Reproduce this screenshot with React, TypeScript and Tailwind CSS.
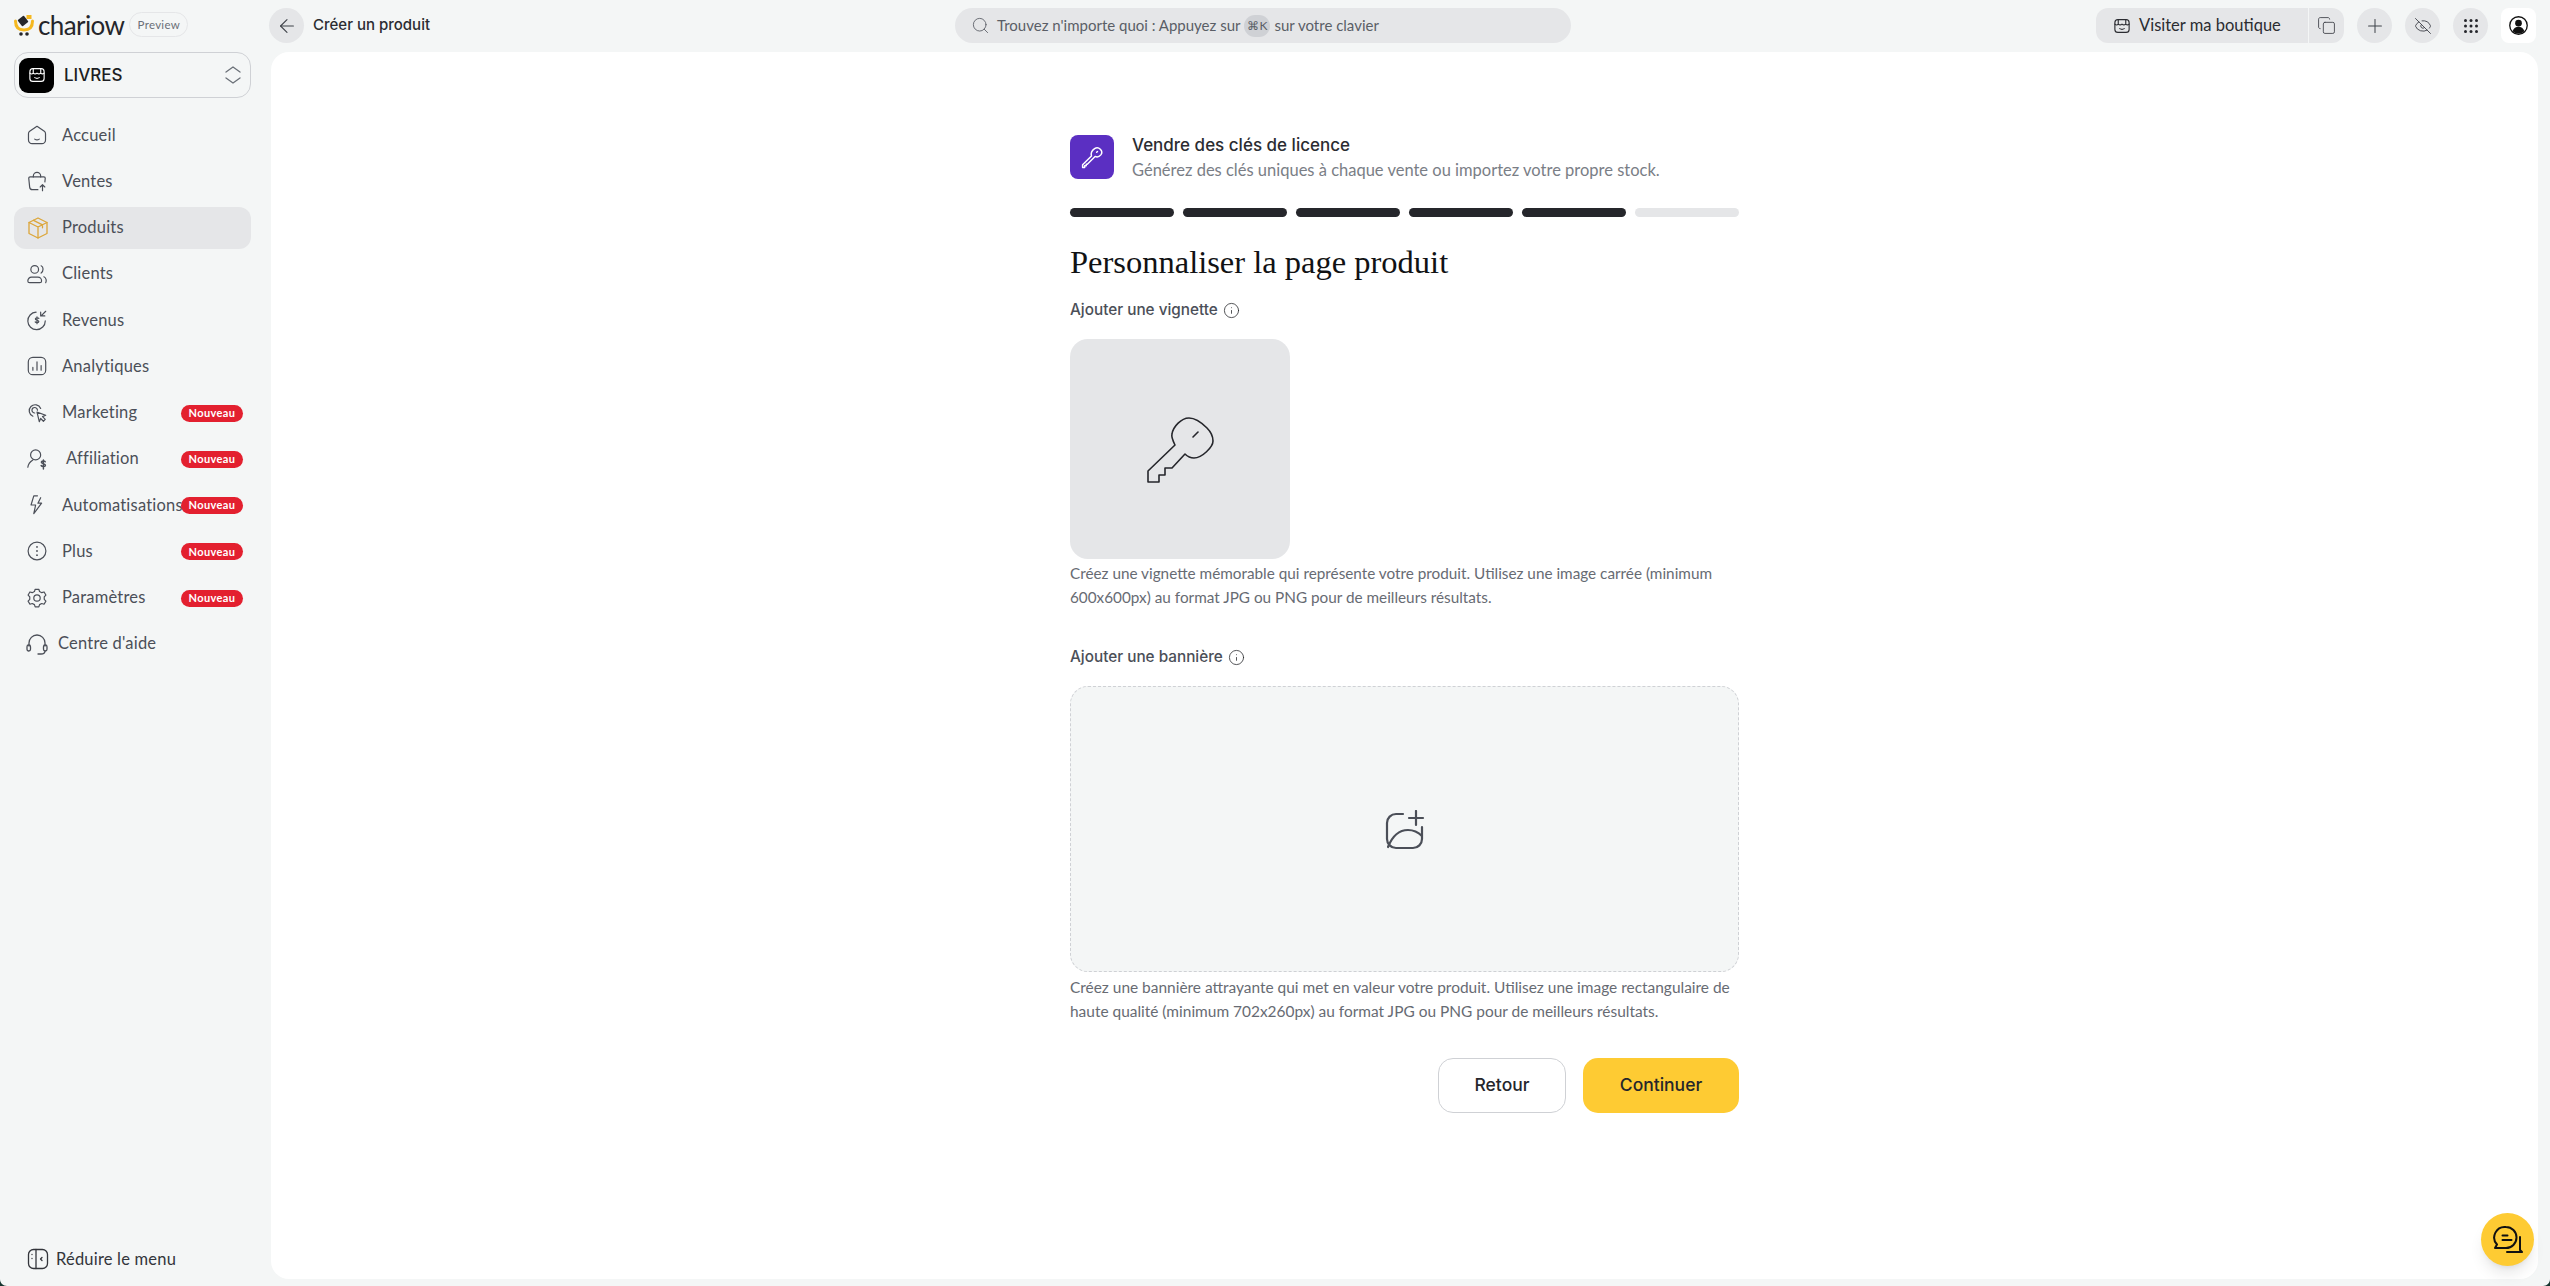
import React from "react";
import { ArrowLeft, Search, Plus, Copy, EyeOff, Info } from "lucide-react";

const S = (p: { size?: number; children: React.ReactNode; sw?: number; className?: string }) => (
  <svg width={p.size ?? 24} height={p.size ?? 24} viewBox="0 0 24 24" fill="none" stroke="currentColor" strokeWidth={p.sw ?? 1.3} strokeLinecap="round" strokeLinejoin="round" className={p.className}>
    {p.children}
  </svg>
);

const HomeI = () => <S><path d="M12 2.500 4 8a3 3 0 0 0-1.300 2.500v7a4 4 0 0 0 4 4h10.600a4 4 0 0 0 4-4v-7A3 3 0 0 0 20 8Z" /><path d="M9.500 16.500c1.500 1 3.500 1 5 0" /></S>;
const BagI = () => <S><path d="M8 7.500v-1a4 4 0 0 1 8 0v1" /><path d="M13 21.500H7a3 3 0 0 1-3-2.800L3 9a1.500 1.500 0 0 1 1.500-1.500h15A1.500 1.500 0 0 1 21 9l-.4 4" /><path d="M18 22.500V16m-2.500 2.500L18 16l2.500 2.500" /></S>;
const BoxI = () => <S><path d="M12 2 3 6.500v11L12 22l9-4.500v-11Z" /><path d="m3 6.500 9 4.500 9-4.500M12 11v11M7.500 4.300l9 4.500v3" /></S>;
const UsersI = () => <S><circle cx="9.500" cy="7" r="4.200" /><path d="M2 19.500a4 4 0 0 1 4-4h7a4 4 0 0 1 4 4c0 1-.8 2-2 2H4c-1.200 0-2-1-2-2Z" /><path d="M16.500 3c2.800 1 2.800 6 0 8M19.500 15c2.500 1 3.200 4.500 2 6.500" /></S>;
const MoneyI = () => <S><path d="M21 13a9.500 9.500 0 1 1-10-9.500" /><path d="M21.500 2.500 16.500 7.500M16 3.500v4h4.500" /><path d="M14 10.300c-.6-.9-3.500-1.200-3.800.4-.3 2 3.800 1.200 3.800 3 0 1.600-3.300 1.500-4 .4M12 8.500v7.500" /></S>;
const ChartI = () => <S><rect x="2.500" y="2.500" width="19" height="19" rx="5" /><path d="M7.500 16.500v-3M12 16.500v-9M16.500 16.500v-5" /></S>;
const CursorI = () => <S><path d="M7.500 15.500A6.500 6.500 0 1 1 16 7" /><path d="M9.500 12A3 3 0 1 1 12.500 9" /><path d="m12 11 9.500 3.500-3.500 1.500 3 3-2 2-3-3-1.500 3.500Z" /></S>;
const AffI = () => <svg width="24" height="24" viewBox="0 0 24 24" fill="none" stroke="currentColor" strokeWidth="1.300" strokeLinecap="round"><circle cx="10.500" cy="7.500" r="5.500" /><path d="M2 21c.5-4 3-6.500 5.500-8" /><path d="M21 15c-.5-1-4-1.300-4.300.5-.3 2 4.500 1.200 4.500 3.200 0 1.800-3.800 1.800-4.700.4M19 13v10" strokeWidth="1.600" /></svg>;
const BoltI = () => <S><path d="M12.500 2H8.500L5.500 12h5l-2 9.500 8.500-11.500h-4L16 4" /></S>;
const DotsI = () => <S><circle cx="12" cy="12" r="9.700" /><path d="M12 7.500v.01M12 12v.01M12 16.500v.01" strokeWidth="2" /></S>;
const GearI = () => <S><circle cx="12" cy="12" r="3.500" /><path d="M10 2.500h4l.8 2.500 2.400 1.200 2.500-.8 2 3.400-1.800 2v2.600l1.800 2-2 3.400-2.500-.8-2.400 1.200-.8 2.500h-4l-.8-2.500-2.400-1.200-2.500.8-2-3.400 1.800-2v-2.600l-1.800-2 2-3.400 2.500.8 2.400-1.200Z" /></S>;
const HeadI = () => <S><path d="M4 14v-3a8 8 0 0 1 16 0v3" /><rect x="2" y="13" width="3.500" height="6" rx="1.700" /><rect x="18.500" y="13" width="3.500" height="6" rx="1.700" /><path d="M20 19c0 2-2 3-4 3h-3" /></S>;
const PanelI = () => <S><rect x="2.500" y="2.500" width="19" height="19" rx="5" /><path d="M10 2.500v19M6 7.500h.01M6 11.500h.01M16 10.500 14.500 12l1.500 1.500" /></S>;
const StoreI = ({ size = 18 }: { size?: number }) => <S size={size} sw={1.5}><rect x="2.500" y="3.500" width="19" height="17" rx="4" /><path d="M2.500 9.500c1.500 1.500 3 1.500 4.500 0 1.700 1.500 3.300 1.500 5 0 1.700 1.500 3.300 1.500 5 0 1.500 1.500 3 1.500 4.500 0M9 15.500c2 1.300 4 1.300 6 0M7 3.500v6M17 3.500v6" /></S>;

type Item = { label: string; icon: React.ReactNode; badge?: boolean; active?: boolean; gap?: string };
const items: Item[] = [
  { label: "Accueil", icon: <HomeI /> },
  { label: "Ventes", icon: <BagI /> },
  { label: "Produits", icon: <span className="text-[#dca63a]"><BoxI /></span>, active: true },
  { label: "Clients", icon: <UsersI /> },
  { label: "Revenus", icon: <MoneyI /> },
  { label: "Analytiques", icon: <ChartI /> },
  { label: "Marketing", icon: <CursorI />, badge: true },
  { label: "Affiliation", icon: <AffI />, badge: true, gap: "ml-[18px]" },
  { label: "Automatisations", icon: <BoltI />, badge: true },
  { label: "Plus", icon: <DotsI />, badge: true },
  { label: "Paramètres", icon: <GearI />, badge: true },
];

const NavRow = ({ item }: { item: Item }) => (
  <div className={`relative flex h-[42px] shrink-0 items-center rounded-xl pl-[14px] text-[16.500px] tracking-[0.2px] text-[#4b4f58] ${item.active ? "bg-[#e5e6e8]" : ""}`}>
    <span className="-ml-[2px] flex w-[22px] shrink-0 items-center">{item.icon}</span>
    <span className={`${item.gap ?? "ml-[14px]"} whitespace-nowrap`}>{item.label}</span>
    {item.badge && (
      <span className="absolute left-[167px] top-[13px] flex h-[17px] w-[62px] items-center justify-center rounded-full bg-[#e3202f] text-[11px] font-bold tracking-[0.4px] text-white">
        Nouveau
      </span>
    )}
  </div>
);

const Round = ({ children }: { children: React.ReactNode }) => (
  <div className="flex h-[35px] w-[35px] items-center justify-center rounded-full bg-[#e5e6e8] text-[#3f4249]">{children}</div>
);

const BARS = [1, 1, 1, 1, 1, 0];
const INTER = "font-['Inter',sans-serif] font-medium";

export default function App() {
  return (
    <div className="relative flex h-[1286px] w-[2550px] overflow-hidden bg-[#f4f6f6] font-['Lato','Liberation_Sans',sans-serif] text-[#25262b]">
      <aside className="flex w-[271px] shrink-0 flex-col pl-[14px] pr-[20px]">
        <div className="flex h-[52px] shrink-0 items-start pt-[13px]">
          <svg width="20" height="23" viewBox="0 0 20 23">
            <path d="M1.500 8c0 6 3 9 8.500 9s8.500-3 8.500-9" fill="none" stroke="#f5b81f" strokeWidth="3" strokeLinecap="round" />
            <rect x="5" y="4" width="8" height="8" rx="1" transform="rotate(-38 9 8)" fill="#25262b" />
            <rect x="12.500" y="2" width="5" height="4" fill="#f5b81f" />
            <circle cx="7" cy="21" r="1.800" fill="#25262b" />
            <circle cx="13" cy="21" r="1.800" fill="#25262b" />
          </svg>
          <span className="ml-[4px] text-[26px] leading-[24px] tracking-[-0.6px] text-[#25262b]">chariow</span>
          <span className="-mt-[1px] ml-[5px] flex h-[25px] w-[59px] items-center justify-center rounded-full border border-[#e5e6e8] text-[11.500px] tracking-[0.3px] text-[#6b7078]">Preview</span>
        </div>
        <div className="flex h-[46px] shrink-0 items-center rounded-[14px] border border-[#cfd1d5] pl-[4px] pr-[9px]">
          <div className="flex h-[35px] w-[35px] items-center justify-center rounded-[9px] bg-black text-white"><StoreI /></div>
          <span className={`ml-[10px] pt-[2px] text-[17px] text-[#1d1e22] ${INTER}`}>LIVRES</span>
          <svg width="16" height="18" viewBox="0 0 16 18" fill="none" stroke="#6b7078" strokeWidth="1.300" strokeLinecap="round" strokeLinejoin="round" className="ml-auto">
            <path d="m1 6 7-5 7 5M1 12l7 5 7-5" />
          </svg>
        </div>
        <nav className="mt-[16px] flex flex-col gap-[4.250px]">
          {items.map((it) => <NavRow key={it.label} item={it} />)}
          <div className="flex h-[42px] items-center pl-[11px] text-[16.500px] tracking-[0.2px] text-[#4b4f58]">
            <HeadI />
            <span className="ml-[9px]">Centre d'aide</span>
          </div>
        </nav>
        <div className="mt-auto mb-[6px] flex h-[42px] items-center pl-[12px] text-[16.500px] tracking-[0.2px] text-[#33353b]">
          <PanelI />
          <span className="ml-[6px]">Réduire le menu</span>
        </div>
      </aside>

      <div className="flex min-w-0 flex-1 flex-col">
        <header className="relative flex h-[52px] shrink-0 items-start pt-[8px]">
          <div className="-ml-[2px]"><Round><ArrowLeft size={22} strokeWidth={1.200} /></Round></div>
          <span className={`ml-[9px] flex h-[35px] w-[119px] items-center whitespace-nowrap text-[15px] text-[#2b2c31] ${INTER}`}>Créer un produit</span>
          <div className="ml-[523px] flex h-[35px] w-[616px] items-center rounded-full bg-[#e5e6e8] pl-[16px] text-[15px] text-[#5a5e66]">
            <Search size={19} strokeWidth={1.100} />
            <span className="ml-[7px] whitespace-nowrap">Trouvez n'importe quoi : Appuyez sur</span>
            <span className="mx-[4px] flex h-[22px] w-[26px] items-center justify-center rounded-full bg-[#cfd1d5] text-[12px]">⌘K</span>
            <span className="whitespace-nowrap">sur votre clavier</span>
          </div>
          <div className="ml-auto mr-[14px] flex items-center">
            <div className="flex h-[35px] w-[212px] items-center rounded-l-xl bg-[#e5e6e8] pl-[17px] text-[16.500px] text-[#2b2c31]">
              <StoreI size={18} />
              <span className="ml-[8px] whitespace-nowrap">Visiter ma boutique</span>
            </div>
            <div className="ml-[1px] flex h-[35px] w-[35px] items-center justify-center rounded-r-xl bg-[#e5e6e8] text-[#3f4249]"><Copy size={19} strokeWidth={1.100} /></div>
            <div className="ml-[13px] flex gap-[13px]">
              <Round><Plus size={22} strokeWidth={1.100} /></Round>
              <Round><EyeOff size={18} strokeWidth={1.200} /></Round>
              <Round>
                <svg width="14" height="14" viewBox="0 0 14 14" fill="#25262b">
                  {[1.500, 7, 12.500].flatMap((y) => [1.500, 7, 12.500].map((x) => <circle key={`${x}-${y}`} cx={x} cy={y} r="1.500" />))}
                </svg>
              </Round>
              <div className="flex h-[35px] w-[35px] items-center justify-center rounded-lg bg-white">
                <svg width="19" height="19" viewBox="0 0 20 20">
                  <circle cx="10" cy="10" r="9.200" fill="none" stroke="#111" strokeWidth="1.400" />
                  <circle cx="10" cy="7.500" r="3.500" fill="#111" />
                  <path d="M3.800 16c1-3.500 3.500-4.800 6.200-4.800s5.200 1.300 6.200 4.800a9 9 0 0 1-12.400 0Z" fill="#111" />
                </svg>
              </div>
            </div>
          </div>
        </header>

        <main className="mb-[7px] mr-[12px] flex flex-1 flex-col items-center rounded-[18px] bg-white pt-[83px]">
          <div className="flex w-[669px] flex-col">
            <div className="flex h-[44px] items-center">
              <div className="flex h-[44px] w-[44px] items-center justify-center rounded-lg bg-[#5b2fc2] text-white">
                <svg width="25" height="25" viewBox="0 0 24 24" fill="none" stroke="currentColor" strokeWidth="1.400" strokeLinejoin="round" strokeLinecap="round">
                  <path d="M14 3.500c2-1.500 4-1 5.500.5s2 3.500.5 5.500c-1.500 1.800-3.500 2.500-5.500 1.500L7 18.500H6V20H4.500v1.500h-2V19l8.500-8.500c-.8-2.500 1-5.500 3-7Z" />
                  <path d="M16 7l.8-.8" />
                </svg>
              </div>
              <div className="ml-[18px] flex flex-col">
                <span className={`pt-[1px] text-[17px] leading-[25px] text-[#2b2c31] ${INTER}`}>Vendre des clés de licence</span>
                <span className="text-[16.500px] leading-[24px] text-[#7a7e86]">Générez des clés uniques à chaque vente ou importez votre propre stock.</span>
              </div>
            </div>
            <div className="mt-[29px] flex gap-[9px]">
              {BARS.map((b, i) => (
                <div key={i} className={`h-[9px] flex-1 rounded-full ${b ? "bg-[#25262b]" : "bg-[#e5e6e8]"}`} />
              ))}
            </div>
            <h1 className="mt-[25px] h-[40px] font-['Liberation_Serif',serif] text-[32.500px] leading-[40px] text-[#111214]">Personnaliser la page produit</h1>
            <div className={`mt-[18px] flex h-[20px] items-center text-[15.300px] text-[#4b4f58] ${INTER}`}>
              Ajouter une vignette
              <Info size={17} strokeWidth={1.100} className="ml-[5px] text-[#25262b]" />
            </div>
            <div className="mt-[19px] flex h-[220px] w-[220px] items-center justify-center rounded-[18px] bg-[#e5e6e8]">
              <svg width="68" height="68" viewBox="0 0 68 68" fill="none" stroke="#25262b" strokeWidth="1.600" strokeLinejoin="round" strokeLinecap="round" className="ml-[1px] mt-[3px]">
                <path d="M28 28C26 24 24 20 25 17C26 10 34 1 42 1C48 1 55 6 60 11C64 15 66 20 66 24C66 30 55 41 47 41C44 41 41 40 38 37L25 51H18V58H12V65H1V54Z" />
                <path d="M51 15l-5 5" />
              </svg>
            </div>
            <p className="mt-[2px] text-[15.300px] leading-[24px] text-[#676b73]">
              Créez une vignette mémorable qui représente votre produit. Utilisez une image carrée (minimum<br />
              600x600px) au format JPG ou PNG pour de meilleurs résultats.
            </p>
            <div className={`mt-[38px] flex h-[20px] items-center text-[15.300px] text-[#4b4f58] ${INTER}`}>
              Ajouter une bannière
              <Info size={17} strokeWidth={1.100} className="ml-[5px] text-[#25262b]" />
            </div>
            <div className="mt-[19px] flex h-[286px] items-center justify-center rounded-[18px] border border-dashed border-[#cfd1d5] bg-[#f4f6f6] text-[#4b4f58]">
              <svg width="40" height="40" viewBox="0 0 40 40" fill="none" stroke="currentColor" strokeWidth="2.200" strokeLinecap="round" strokeLinejoin="round" className="mt-[2px]">
                <path d="M18 4h-7a9 9 0 0 0-9 9v16a9 9 0 0 0 9 9h17a9 9 0 0 0 9-9V17" />
                <path d="M3 37c4-10 11-17 20-17 6 0 10 2 14 6" />
                <path d="M31 1v14M24 8h14" />
              </svg>
            </div>
            <p className="mt-[3px] whitespace-nowrap text-[15.450px] leading-[24px] text-[#676b73]">
              Créez une bannière attrayante qui met en valeur votre produit. Utilisez une image rectangulaire de<br />
              haute qualité (minimum 702x260px) au format JPG ou PNG pour de meilleurs résultats.
            </p>
            <div className="mt-[35px] flex justify-end gap-[17px]">
              <button className={`h-[55px] w-[128px] rounded-[15px] border border-[#cfd1d5] bg-white text-[17.500px] text-[#25262b] ${INTER}`}>Retour</button>
              <button className={`h-[55px] w-[156px] rounded-[15px] bg-[#fecb33] text-[17.500px] text-[#25262b] ${INTER}`}>Continuer</button>
            </div>
          </div>
        </main>
      </div>

      <button className="absolute right-[16px] top-[1213px] flex h-[53px] w-[53px] items-center justify-center rounded-full bg-[#fecb33] shadow-lg">
        <svg width="30" height="30" viewBox="0 0 30 30" fill="none" stroke="#111" strokeWidth="2" strokeLinecap="round" strokeLinejoin="round">
          <path d="M13 2a10.500 10.500 0 0 1 0 21H2l2-3.500A10.500 10.500 0 0 1 13 2Z" />
          <path d="M9.500 10.500h5M9.500 15h9" />
          <path d="M27 12v13l2 2H14" />
        </svg>
      </button>

      <svg width="7" height="7" viewBox="0 0 7 7" className="absolute bottom-0 left-0"><path d="M0 0C0 4 3 7 7 7H0Z" fill="#16352f" /></svg>
      <svg width="7" height="7" viewBox="0 0 7 7" className="absolute bottom-0 right-0"><path d="M7 0C7 4 4 7 0 7H7Z" fill="#16352f" /></svg>
    </div>
  );
}
